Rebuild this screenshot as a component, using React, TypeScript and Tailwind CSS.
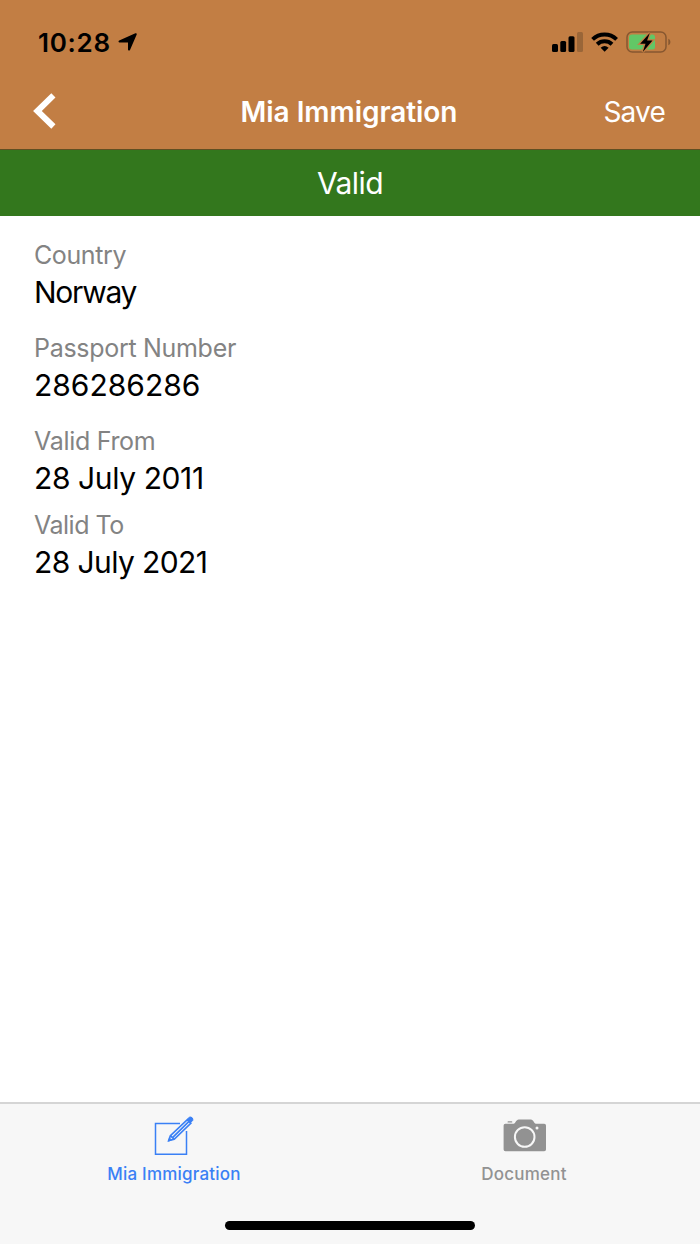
import type { ReactNode } from 'react'

function LocationIcon() {
  return (
    <svg className="ml-[7px] h-[18px] w-[19px]" viewBox="117 33 19 18">
      <path d="M134.4 33.3c.9-.3 1.6.4 1.3 1.3l-6.7 15.3c-.5 1-2 .8-2-.4v-7.1h-8.4c-1.2 0-1.5-1.5-.4-2z" />
    </svg>
  )
}

function SignalIcon() {
  return (
    <svg className="h-[20px] w-[32px]" viewBox="551 32 32 20">
      <rect x="552" y="44" width="6" height="8" rx="1.5" />
      <rect x="560.3" y="41" width="5.8" height="11" rx="1.5" />
      <rect x="568.5" y="36.2" width="6" height="15.8" rx="1.5" />
      <rect x="577" y="32" width="6" height="20" rx="1.5" fill="#9a6638" />
    </svg>
  )
}

function WifiIcon() {
  return (
    <svg className="ml-[8px] h-[20px] w-[28px]" viewBox="591 32 28 20">
      <g fill="none" stroke="#000" strokeWidth="4">
        <path d="M592.6 39.4a17.3 17.3 0 0 1 24 0" />
        <path d="M597.2 44.2a10.8 10.8 0 0 1 14.8 0" />
      </g>
      <path d="M604.6 51.8l-4-4.1q4-3.3 8 0z" />
    </svg>
  )
}

function BatteryIcon() {
  return (
    <svg className="ml-[7px] h-[22px] w-[45px]" viewBox="626 31 45 22">
      <rect x="627" y="32" width="39" height="20" rx="5.3" fill="none" stroke="#875730" strokeWidth="1.5" />
      <path d="M668.3 38.7c2.8 1 2.8 5.6 0 6.6z" fill="#875730" />
      <path d="M632 34.6h20.5a2.5 2.5 0 0 1 2.5 2.5v9.8a2.5 2.5 0 0 1-2.5 2.5H632a3 3 0 0 1-3-3v-8.8a3 3 0 0 1 3-3z" fill="#62c766" />
      <path d="M649.8 33.1l-9.7 10.6h5.4l-2.7 8.3 9.7-11.4h-5.4z" stroke="#c27e44" strokeWidth="2.6" />
      <path d="M649.8 33.1l-9.7 10.6h5.4l-2.7 8.3 9.7-11.4h-5.4z" />
    </svg>
  )
}

function EditIcon() {
  return (
    <svg className="h-[40px] w-[40px]" viewBox="154 1116 40 40" fill="none" stroke="#3a80f5">
      <path d="M180 1123.5H155.5V1154.3H186.5V1131" strokeWidth="1.5" />
      <path d="M168.7 1140.6l1.7-5 16.9-15.9 3.5 3.6-16.6 16zM172.8 1137.3l16.2-16M170.4 1135.6l3.8 3.7" strokeWidth="1.7" />
      <path d="M187 1119.5l2.3-2.2q1.5-.7 2.8.4 1.2 1.2.6 2.8l-2.2 2.2z" fill="#3a80f5" strokeWidth="1" />
      <path d="M168.3 1141.3l1.2-3.4 2.1 2.2z" fill="#3a80f5" strokeWidth=".8" />
    </svg>
  )
}

function CameraIcon() {
  return (
    <svg className="h-[40px] w-[44px]" viewBox="502 1116 44 40" fill="#929292">
      <path d="M505.4 1123.8h8.3c1.8-.4 2.4-4.4 5-4.4h12.2c2.6 0 3 4 5 4.4h8.3q1.8 0 1.8 1.7v23.9q0 1.8-1.8 1.8h-38.8q-1.8 0-1.8-1.8v-23.9q0-1.7 1.8-1.7z" />
      <rect x="507.5" y="1121.2" width="4.8" height="1.4" rx=".7" />
      <circle cx="524.7" cy="1137" r="9.8" fill="none" stroke="#f7f7f7" strokeWidth="2" />
      <circle cx="537" cy="1128" r="1.5" fill="#f7f7f7" />
    </svg>
  )
}

type FieldProps = { label: string; className: string; valueClass: string; labelClass: string; value: string }

function Field({ label, value, className, labelClass, valueClass }: FieldProps) {
  return (
    <div className={className}>
      <p className={`h-[34px] text-[25px] leading-[34px] text-[#838383] ${labelClass}`}>{label}</p>
      <p className={`h-[40px] text-[30px] leading-[40px] text-black ${valueClass}`}>{value}</p>
    </div>
  )
}

function Tab({ icon, label, className }: { icon: ReactNode; label: string; className: string }) {
  return (
    <div className={`flex w-[350px] flex-col items-center pt-[12px] text-[17px] leading-[22px] font-medium tracking-[0.2px] ${className}`}>
      {icon}
      <span className="mt-[7px]">{label}</span>
    </div>
  )
}

export default function App() {
  return (
    <div className="flex h-[1244px] w-[700px] flex-col overflow-hidden bg-white font-['Inter',sans-serif]">
      <header className="h-[150px] border-b border-[#604f22] bg-[#c27e44]">
        {/* Status bar */}
        <div className="flex h-[74px] items-center justify-between pt-[10px] pr-[29px] pl-[38px]">
          <div className="flex items-center">
            <span className="text-[26px] font-semibold tracking-[0.7px]">10:28</span>
            <LocationIcon />
          </div>
          <div className="flex items-center">
            <SignalIcon />
            <WifiIcon />
            <BatteryIcon />
          </div>
        </div>

        {/* Navigation */}
        <div className="grid h-[75px] grid-cols-[1fr_auto_1fr] items-center pr-[35px] pl-[33px] text-white">
          <svg className="h-[38px] w-[24px]" viewBox="33 93 24 38" fill="none" stroke="#fff" strokeWidth="6">
            <path d="M53.4 95.4L37.4 111l16 15.5" />
          </svg>
          <h1 className="text-[28px] leading-[36px] font-semibold tracking-[-0.05px]">Mia Immigration</h1>
          <span className="text-right text-[28px] leading-[36px] tracking-[-0.8px]">Save</span>
        </div>
      </header>

      <div className="flex h-[66px] items-center justify-center bg-[#33771d] text-[30px] tracking-[-0.6px] text-white">Valid</div>

      <main className="flex-1 pt-[22px] pl-[34px]">
        <Field label="Country" value="Norway" className="h-[93px]" labelClass="tracking-[-0.4px]" valueClass="tracking-[-1.3px]" />
        <Field label="Passport Number" value="286286286" className="h-[93px]" labelClass="tracking-[-0.3px]" valueClass="" />
        <Field label="Valid From" value="28 July 2011" className="h-[84px]" labelClass="tracking-[-0.3px]" valueClass="tracking-[-0.4px]" />
        <Field label="Valid To" value="28 July 2021" className="h-[84px]" labelClass="tracking-[-0.5px]" valueClass="tracking-[-0.6px]" />
      </main>

      <footer className="flex h-[142px] flex-col border-t-2 border-[#d5d5d5] bg-[#f7f7f7]">
        <div className="-ml-px flex h-[117px]">
          <Tab icon={<EditIcon />} label="Mia Immigration" className="text-[#3a80f5]" />
          <Tab icon={<CameraIcon />} label="Document" className="text-[#929292]" />
        </div>
        <div className="mx-auto h-[9px] w-[250px] rounded-full bg-black" />
      </footer>
    </div>
  )
}
